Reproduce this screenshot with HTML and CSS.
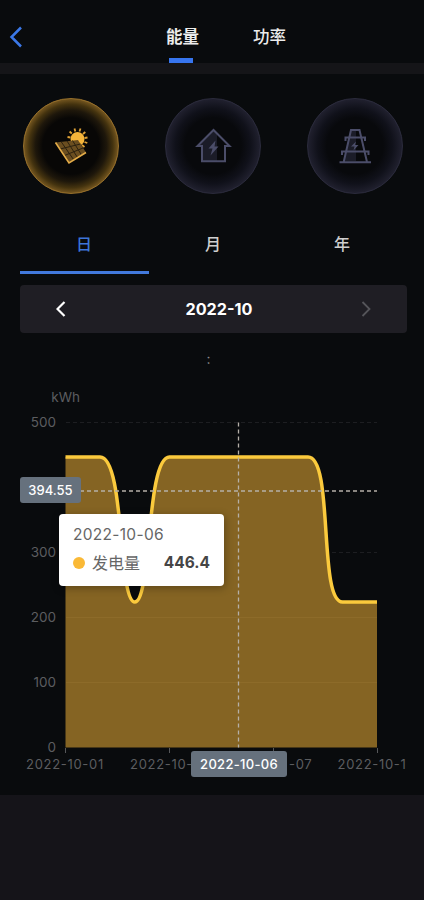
FILE: index.html
```html
<!DOCTYPE html>
<html lang="zh-CN">
<head>
    <meta charset="UTF-8">
    <meta name="viewport" content="width=device-width, initial-scale=1.0">
    <title>能量</title>
    <link rel="stylesheet" href="styles.css">
</head>
<body>
    <header class="topbar">
        <svg class="back" width="14" height="22" viewBox="0 0 14 22"><path d="M12 1.5 2.5 11 12 20.5"/></svg>
        <nav class="top-tabs">
            <span class="top-tab active">能量</span>
            <span class="top-tab">功率</span>
        </nav>
    </header>

    <main class="content">
        <div class="sources">
            <div class="source solar">
                <svg width="40" height="40" viewBox="0 0 40 40">
                    <circle class="sun" cx="26.500" cy="13" r="7"/>
                    <path class="rays" d="M19.500 11.500l-3-.5M20.800 7.500l-2.200-2M24.300 5.500l-.8-3M28.500 5.500l1-3M32 8l2.300-2M33.500 12l3-.5M33.500 16l2.800 1M31 19l2.500 2"/>
                    <path class="panel" d="M4.500 16.500 27 14 35 26.500 18 37z"/>
                    <path class="panel-grid" d="M9 23l20.500-5M13.500 29.500l18.500-7.500M10 15.500l12.500 18M16 15l10.500 16.500M21.500 14.500l9 14.500"/>
                    <path class="panel-edge" d="M4.500 16.500 18 37 35 26.500"/>
                </svg>
            </div>
            <div class="source">
                <svg width="40" height="40" viewBox="0 0 40 40">
                    <path class="shade" d="M20.500 4 6 19h3v16h15V8z"/>
                    <path class="line" d="M20.500 4 4.500 20H9v15.300h23V20h4.500z"/>
                    <path class="fill" d="M22.500 14.500l-7 8h4l-2 7 8-9h-4z"/>
                </svg>
            </div>
            <div class="source">
                <svg width="40" height="40" viewBox="0 0 40 40">
                    <path class="shade" d="M16 4h5v31H9z"/>
                    <path class="line" d="M8.700 36 16 4h8.500L32 36M10.500 15V11.500h19.500V15M7 29V25.500h26.500V29M4.500 36.300h31.500"/>
                    <path class="fill" d="M21 15.500l-5 5h3.500l-1 4 5-5.500H20z"/>
                </svg>
            </div>
        </div>

        <div class="periods">
            <span class="period active">日</span>
            <span class="period">月</span>
            <span class="period">年</span>
        </div>

        <div class="date-bar">
            <svg width="10" height="16" viewBox="0 0 10 16"><path d="M8.500 1 1.500 8l7 7"/></svg>
            <span>2022-10</span>
            <svg class="disabled" width="10" height="16" viewBox="0 0 10 16"><path d="M1.500 1l7 7-7 7"/></svg>
        </div>

        <div class="legend">:</div>

        <div class="chart">
            <svg width="387" height="415" viewBox="20 0 387 415">
                <g class="axis-text y-labels">
                    <text x="80" y="22">kWh</text>
                    <text x="56" y="47">500</text>
                    <text x="56" y="177">300</text>
                    <text x="56" y="242">200</text>
                    <text x="56" y="307">100</text>
                    <text x="56" y="372">0</text>
                </g>
                <path class="grid" d="M66 42.500H377M66 172.500H377"/>
                <path class="area" d="M65.500 77H100C125 77 118 222 134.800 222S146 77 169.500 77H308C334 77 318 222 342.500 222H377V367.500H65.500z"/>
                <path class="grid-over" d="M66 237.500H377M66 302.500H377"/>
                <path class="curve" d="M65.500 77H100C125 77 118 222 134.800 222S146 77 169.500 77H308C334 77 318 222 342.500 222H377"/>
                <path class="ticks" d="M65.500 368v5M169.500 368v5M273.500 368v5M377.500 368v5"/>
                <g class="axis-text x-labels">
                    <text x="26" y="389">2022-10-01</text>
                    <text x="130" y="389">2022-10-</text>
                    <text x="289" y="389">-07</text>
                    <text x="337.500" y="389">2022-10-1</text>
                </g>
                <path class="pointer" d="M238.500 42.500V367.500M66 111H377"/>
            </svg>
            <span class="tag tag-y">394.55</span>
            <span class="tag tag-x">2022-10-06</span>
            <div class="tooltip">
                <div class="tooltip-date">2022-10-06</div>
                <div class="tooltip-row">
                    <i class="dot"></i>
                    <span>发电量</span>
                    <b>446.4</b>
                </div>
            </div>
        </div>
    </main>
</body>
</html>
```
FILE: styles.css
```css
* {
    box-sizing: border-box;
}
body {
    margin: 0;
    height: 900px;
    overflow: hidden;
    background: #151419;
    color: #ececec;
    font-family: Inter, "Noto Sans CJK SC", sans-serif;
}
svg {
    display: block;
    fill: none;
}

/* header */
.topbar {
    display: flex;
    align-items: center;
    height: 74px;
    padding: 0 0 0 9px;
    background: #090b0d;
    border-bottom: 11px solid #151518;
}
.back {
    margin-top: 11px;
    stroke: #3b78e7;
    stroke-width: 2.5;
}
.top-tabs {
    display: flex;
    gap: 54px;
    height: 63px;
    margin-left: 143px;
}
.top-tab {
    display: flex;
    flex-direction: column;
    align-items: center;
    height: 63px;
    padding-top: 25px;
    font-size: 16.5px;
    line-height: 24px;
    font-weight: 500;
}
.top-tab.active {
    font-weight: 700;
}
.top-tab.active::after {
    content: "";
    width: 24px;
    height: 5px;
    margin: 9px 4px 0 0;
    background: #3775ee;
}

.content {
    height: 721px;
    padding: 24px 17px 0 20px;
    background: #090b0d;
}

/* energy sources */
.sources {
    display: flex;
    justify-content: space-between;
    padding: 0 4px 0 3px;
}
.source {
    display: flex;
    align-items: center;
    justify-content: center;
    width: 96px;
    height: 96px;
    border-radius: 50%;
    border: 1.5px solid #2b2b3c;
    background: radial-gradient(circle closest-side, #08090c 60%, #10111a 80%, #20202e 100%);
}
.source.solar {
    border-color: #97702b;
    background: radial-gradient(circle closest-side, #080706 60%, #1e170b 76%, #44330f 89%, #73551f 100%);
}
.source .line {
    stroke: #4b4d69;
    stroke-width: 2;
}
.source .fill {
    fill: #4b4d69;
}
.source .shade {
    fill: #1b1c28;
}
.source .sun {
    fill: #f5b43a;
}
.source .rays {
    stroke: #e0a236;
    stroke-width: 1.8;
}
.source .panel {
    fill: #6b4e20;
}
.source .panel-grid {
    stroke: #2c210f;
    stroke-width: 1;
}
.source .panel-edge {
    stroke: #e4ac48;
    stroke-width: 1.6;
}

/* day / month / year */
.periods {
    display: flex;
    height: 80px;
}
.period {
    flex: 1;
    padding: 38px 1px 0 0;
    font-size: 16px;
    line-height: 24px;
    font-weight: 500;
    text-align: center;
    color: #cfcfcf;
}
.period.active {
    color: #3d75d8;
    border-bottom: 3px solid #4279dc;
}

.date-bar {
    display: flex;
    align-items: center;
    justify-content: space-between;
    height: 48px;
    margin-top: 11px;
    padding: 0 36px;
    border-radius: 4px;
    background: #1f1e24;
    font-size: 16.2px;
    font-weight: 700;
    color: #fff;
}
.date-bar svg {
    stroke: #fff;
    stroke-width: 2.2;
}
.date-bar .disabled {
    stroke: #55555a;
    stroke-width: 1.8;
}
.date-bar span {
    margin-left: 11px;
}

.legend {
    height: 47px;
    padding: 16px 10px 0 0;
    font-size: 14px;
    line-height: 20px;
    text-align: center;
    color: #8a8a8a;
}

/* chart */
.chart {
    position: relative;
    height: 415px;
}
.axis-text {
    fill: #5c5d60;
    font-size: 13px;
}
.y-labels {
    text-anchor: end;
    font-size: 13.5px;
}
.x-labels {
    letter-spacing: 0.7px;
}
.grid {
    stroke: #1d1e21;
    stroke-dasharray: 4 3;
}
.grid-over {
    stroke: #8d6b29;
}
.area {
    fill: #856423;
}
.curve {
    stroke: #fbca3d;
    stroke-width: 3.5;
}
.ticks {
    stroke: #56575a;
}
.pointer {
    stroke: #b5b0a8;
    stroke-width: 1.3;
    stroke-dasharray: 4 3;
}
.tag {
    position: absolute;
    height: 26px;
    border-radius: 3px;
    background: #66717d;
    color: #fff;
    font-size: 13px;
    line-height: 26px;
    font-weight: 500;
    text-align: center;
}
.tag-y {
    left: 0;
    top: 97px;
    width: 61px;
}
.tag-x {
    left: 171px;
    top: 371px;
    width: 96px;
    letter-spacing: 0.3px;
}
.tooltip {
    position: absolute;
    left: 39px;
    top: 134px;
    width: 165px;
    height: 72px;
    padding: 10px 14px;
    border-radius: 4px;
    background: #fff;
    box-shadow: 1px 2px 8px rgba(0, 0, 0, 0.3);
    color: #666;
    font-size: 15.5px;
}
.tooltip-date {
    line-height: 22px;
    letter-spacing: 0.3px;
}
.tooltip-row {
    display: flex;
    align-items: center;
    margin-top: 4px;
    line-height: 26px;
    font-size: 16px;
}
.tooltip-row b {
    margin-left: auto;
    color: #454545;
    font-size: 15.5px;
}
.dot {
    width: 12px;
    height: 12px;
    margin-right: 7px;
    border-radius: 50%;
    background: #fab936;
}
```
